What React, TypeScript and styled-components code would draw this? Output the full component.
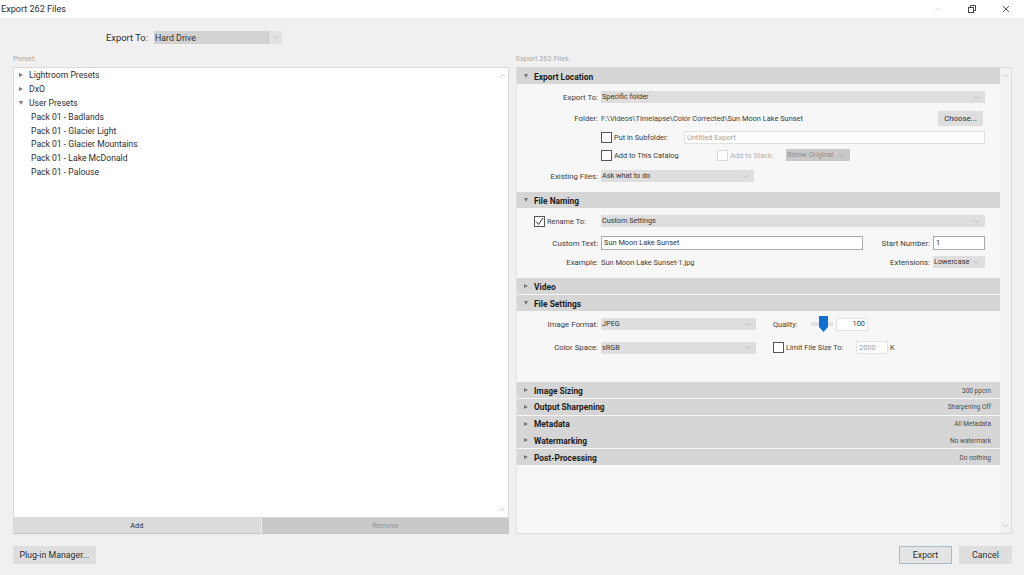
import React from "react";
import styled, { createGlobalStyle } from "styled-components";
import { ChevronDown, ChevronUp } from "lucide-react";

const GlobalStyle = createGlobalStyle`
  html, body {
    margin: 0;
    padding: 0;
    background: #f0f0f0;
  }
  * {
    box-sizing: border-box;
  }
`;

const Dialog = styled.div`
  width: 1024px;
  height: 575px;
  display: flex;
  flex-direction: column;
  overflow: hidden;
  background: #f0f0f0;
  color: #2e2e2e;
  font-family: Roboto, "Open Sans", sans-serif;
  font-size: 7.8px;
  line-height: 12px;
`;

const TitleBar = styled.div`
  height: 18px;
  flex: none;
  display: flex;
  align-items: center;
  justify-content: space-between;
  background: #ffffff;
  padding-left: 1px;
  font-size: 9.1px;
`;

const WindowButtons = styled.div`
  display: flex;
  align-items: center;
  gap: 26px;
  padding-right: 14px;
  color: #444;
`;

const ExportToBar = styled.div`
  height: 13px;
  margin: 13px 0 7px;
  padding-left: 106px;
  flex: none;
  display: flex;
  align-items: center;
  font-size: 9.4px;
`;

const ExportToLabel = styled.span`
  width: 48px;
  flex: none;
`;

const Columns = styled.div`
  display: flex;
  gap: 7px;
  padding: 0 12px 0 13px;
  height: 483px;
  flex: none;
`;

const Column = styled.div`
  width: 496px;
  display: flex;
  flex-direction: column;
`;

const ColumnCaption = styled.div`
  height: 16px;
  font-size: 7.4px;
  color: #a8a8a8;
  line-height: 16px;
  flex: none;
`;

const ListBox = styled.div`
  height: 451px;
  flex: none;
  display: flex;
  background: #ffffff;
  border: 1px solid #d9d9d9;
`;

const Tree = styled.div`
  flex: 1;
`;

const TreeRow = styled.div<{ $child?: boolean }>`
  height: 13.92px;
  display: flex;
  align-items: center;
  gap: 6px;
  padding-left: ${(p) => (p.$child ? 17 : 5)}px;
  font-size: 8.6px;
  white-space: nowrap;
`;

const Triangle = styled.span<{ $open?: boolean }>`
  width: 0;
  height: 0;
  flex: none;
  border-style: solid;
  border-color: transparent;
  ${(p) =>
    p.$open
      ? `border-width: 4px 2.5px 0 2.5px; border-top-color: #777;`
      : `border-width: 2.5px 0 2.5px 4px; border-left-color: #777;`}
`;

const ScrollBar = styled.div<{ $tinted?: boolean }>`
  width: 11px;
  flex: none;
  display: flex;
  flex-direction: column;
  align-items: center;
  justify-content: space-between;
  padding: 3px 0;
  color: #a8a8a8;
  background: ${(p) => (p.$tinted ? "#f2f2f2" : "transparent")};
`;

const ButtonPair = styled.div`
  height: 16px;
  flex: none;
  display: flex;
  gap: 1px;
`;

const PairButton = styled.div<{ $disabled?: boolean }>`
  flex: 1;
  display: flex;
  align-items: center;
  justify-content: center;
  background: ${(p) => (p.$disabled ? "#c9c9c9" : "#dcdcdc")};
  color: ${(p) => (p.$disabled ? "#949494" : "#2e2e2e")};
  border-bottom: 1px solid #c4c4c4;
  font-size: 7.3px;
`;

const Panels = styled.div`
  height: 467px;
  flex: none;
  display: flex;
  background: #f7f7f7;
  border: 1px solid #dcdcdc;
  border-left: 1px solid #e2e2e2;
`;

const PanelStack = styled.div`
  flex: 1;
  min-width: 0;
  display: flex;
  flex-direction: column;
`;

const SectionHeader = styled.div<{ $gapBelow?: number }>`
  height: 16px;
  flex: none;
  display: flex;
  align-items: center;
  gap: 6px;
  padding-left: 7px;
  padding-right: 9px;
  margin-bottom: ${(p) => p.$gapBelow ?? 0}px;
  background: #d6d6d6;
`;

const SectionTitle = styled.span`
  flex: 1;
  padding-top: 1px;
  font-weight: 700;
  font-size: 8.4px;
  color: #1c1c1c;
`;

const SectionSummary = styled.span`
  padding-top: 1px;
  font-size: 6.5px;
  color: #4a4a4a;
`;

const SectionBody = styled.div<{ $height: number }>`
  height: ${(p) => p.$height}px;
  flex: none;
  display: flex;
  flex-direction: column;
`;

const FormRow = styled.div<{ $top: number; $height?: number }>`
  height: ${(p) => p.$height ?? 12}px;
  margin-top: ${(p) => p.$top}px;
  flex: none;
  display: flex;
  align-items: center;
`;

const FieldLabel = styled.span<{ $width?: number }>`
  width: ${(p) => p.$width ?? 81}px;
  margin-right: 3px;
  padding-top: 1px;
  flex: none;
  text-align: right;
  white-space: nowrap;
  color: #3c3c3c;
`;

const Select = styled.div<{ $width: number; $muted?: boolean; $height?: number }>`
  width: ${(p) => p.$width}px;
  height: ${(p) => p.$height ?? 12}px;
  flex: none;
  display: flex;
  align-items: center;
  justify-content: space-between;
  padding: 0 4px 0 1px;
  font-size: 7.3px;
  background: ${(p) => (p.$muted ? "#c9c9c9" : "#dedede")};
  color: ${(p) => (p.$muted ? "#8e8e8e" : "#333")};
  white-space: nowrap;
`;

const TargetSelect = styled(Select)`
  padding: 0 0 0 1px;
  background: #d2d2d2;
  font-size: 8.8px;
`;

const TargetArrow = styled.span`
  width: 14px;
  height: 100%;
  display: flex;
  align-items: center;
  justify-content: center;
  background: #e2e2e2;
  border-left: 1px solid #c8c8c8;
  color: #8a8a8a;
`;

const Check = styled.span<{ $disabled?: boolean; $margin?: number }>`
  width: 11px;
  height: 11px;
  flex: none;
  margin-right: 2px;
  margin-left: ${(p) => p.$margin ?? 0}px;
  display: flex;
  align-items: center;
  justify-content: center;
  background: #fdfdfd;
  border: 1px solid ${(p) => (p.$disabled ? "#dadada" : "#555")};
`;

const TextBox = styled.div<{ $width: number; $height?: number; $strong?: boolean; $alignEnd?: boolean; $faint?: boolean }>`
  width: ${(p) => p.$width}px;
  height: ${(p) => p.$height ?? 14}px;
  flex: none;
  display: flex;
  align-items: center;
  justify-content: ${(p) => (p.$alignEnd ? "flex-end" : "flex-start")};
  padding: 0 2px;
  font-size: 7.4px;
  background: #ffffff;
  border: 1px solid ${(p) => (p.$strong ? "#a9a9a9" : "#e2e2e2")};
  color: ${(p) => (p.$faint ? "#a0a0a0" : "#333")};
`;

const PlainText = styled.span<{ $width?: number; $faint?: boolean; $margin?: number }>`
  ${(p) => (p.$width ? `width: ${p.$width}px;` : "")}
  ${(p) => (p.$margin ? `margin-left: ${p.$margin}px;` : "")}
  padding-top: 1px;
  flex: none;
  font-size: 7.4px;
  white-space: nowrap;
  color: ${(p) => (p.$faint ? "#b0b0b0" : "#3c3c3c")};
`;

const SmallButton = styled.div`
  width: 45px;
  height: 15px;
  flex: none;
  display: flex;
  align-items: center;
  justify-content: center;
  background: #dedede;
  font-size: 7.8px;
`;

const SliderTrack = styled.div`
  width: 22px;
  height: 4px;
  flex: none;
  margin: 0 3px 0 13px;
  background: #e2e2e2;
  position: relative;
`;

const SliderThumb = styled.svg`
  position: absolute;
  left: 8px;
  top: -6px;
  color: #0f6fd2;
`;

const Footer = styled.div`
  flex: 1;
  display: flex;
  justify-content: space-between;
  padding: 12px 12px 0 13px;
`;

const FooterGroup = styled.div`
  display: flex;
  gap: 7px;
`;

const FooterButton = styled.div<{ $width: number; $primary?: boolean }>`
  width: ${(p) => p.$width}px;
  height: 18px;
  display: flex;
  align-items: center;
  justify-content: center;
  font-size: 8.8px;
  background: ${(p) => (p.$primary ? "#e4e4e4" : "#dedede")};
  border: 1px solid ${(p) => (p.$primary ? "#a7bccb" : "#dedede")};
`;

const Arrow = ({ size = 9 }: { size?: number }) => <ChevronDown size={size} strokeWidth={1.2} color="#8f8f8f" />;

const collapsed = [
  ["Image Sizing", "300 ppcm"],
  ["Output Sharpening", "Sharpening Off"],
  ["Metadata", "All Metadata"],
  ["Watermarking", "No watermark"],
  ["Post-Processing", "Do nothing"],
];

export default function App() {
  return (
    <Dialog>
      <GlobalStyle />
      <TitleBar>
        Export 262 Files
        <WindowButtons>
          <svg width="8" height="8" viewBox="0 0 8 8">
            <path d="M1 4h6" stroke="#e0e0e0" strokeWidth="1" />
          </svg>
          <svg width="8" height="8" viewBox="0 0 8 8" fill="none" stroke="#444" strokeWidth="1">
            <rect x="0.5" y="2.5" width="5" height="5" />
            <path d="M2.5 2V0.5H7.5V5.5H6" />
          </svg>
          <svg width="8" height="8" viewBox="0 0 8 8" fill="none" stroke="#444" strokeWidth="0.9">
            <path d="M1 1l6 6M7 1L1 7" />
          </svg>
        </WindowButtons>
      </TitleBar>
      <ExportToBar>
        <ExportToLabel>Export To:</ExportToLabel>
        <TargetSelect $width={128} $height={13}>
          Hard Drive
          <TargetArrow>
            <Arrow />
          </TargetArrow>
        </TargetSelect>
      </ExportToBar>
      <Columns>
        <Column>
          <ColumnCaption>Preset:</ColumnCaption>
          <ListBox>
            <Tree>
              <TreeRow>
                <Triangle />
                Lightroom Presets
              </TreeRow>
              <TreeRow>
                <Triangle />
                DxO
              </TreeRow>
              <TreeRow>
                <Triangle $open />
                User Presets
              </TreeRow>
              <TreeRow $child>Pack 01 - Badlands</TreeRow>
              <TreeRow $child>Pack 01 - Glacier Light</TreeRow>
              <TreeRow $child>Pack 01 - Glacier Mountains</TreeRow>
              <TreeRow $child>Pack 01 - Lake McDonald</TreeRow>
              <TreeRow $child>Pack 01 - Palouse</TreeRow>
            </Tree>
            <ScrollBar>
              <ChevronUp size={9} strokeWidth={1.4} />
              <ChevronDown size={9} strokeWidth={1.4} />
            </ScrollBar>
          </ListBox>
          <ButtonPair>
            <PairButton>Add</PairButton>
            <PairButton $disabled>Remove</PairButton>
          </ButtonPair>
        </Column>
        <Column>
          <ColumnCaption>Export 262 Files</ColumnCaption>
          <Panels>
            <PanelStack>
              <SectionHeader>
                <Triangle $open />
                <SectionTitle>Export Location</SectionTitle>
              </SectionHeader>
              <SectionBody $height={108}>
                <FormRow $top={7}>
                  <FieldLabel>Export To:</FieldLabel>
                  <Select $width={384}>
                    Specific folder
                    <Arrow />
                  </Select>
                </FormRow>
                <FormRow $top={8} $height={15}>
                  <FieldLabel>Folder:</FieldLabel>
                  <PlainText $width={337}>F:\Videos\Timelapse\Color Corrected\Sun Moon Lake Sunset</PlainText>
                  <SmallButton>Choose...</SmallButton>
                </FormRow>
                <FormRow $top={5} $height={13}>
                  <FieldLabel />
                  <Check />
                  <PlainText $width={70}>Put in Subfolder:</PlainText>
                  <TextBox $width={301} $height={13} $faint>
                    Untitled Export
                  </TextBox>
                </FormRow>
                <FormRow $top={5}>
                  <FieldLabel />
                  <Check />
                  <PlainText $width={103}>Add to This Catalog</PlainText>
                  <Check $disabled />
                  <PlainText $width={56} $faint>
                    Add to Stack:
                  </PlainText>
                  <Select $width={64} $muted>
                    Below Original
                    <Arrow />
                  </Select>
                </FormRow>
                <FormRow $top={9}>
                  <FieldLabel>Existing Files:</FieldLabel>
                  <Select $width={153}>
                    Ask what to do
                    <Arrow />
                  </Select>
                </FormRow>
              </SectionBody>
              <SectionHeader>
                <Triangle $open />
                <SectionTitle>File Naming</SectionTitle>
              </SectionHeader>
              <SectionBody $height={70}>
                <FormRow $top={7}>
                  <FieldLabel $width={14} />
                  <Check>
                    <svg width="9" height="9" viewBox="0 0 9 9" fill="none" stroke="#333" strokeWidth="1">
                      <path d="M1 4.5l2.5 3L8 1" />
                    </svg>
                  </Check>
                  <PlainText $width={54}>Rename To:</PlainText>
                  <Select $width={384}>
                    Custom Settings
                    <Arrow />
                  </Select>
                </FormRow>
                <FormRow $top={9} $height={14}>
                  <FieldLabel>Custom Text:</FieldLabel>
                  <TextBox $width={262} $strong>
                    Sun Moon Lake Sunset
                  </TextBox>
                  <FieldLabel $width={67}>Start Number:</FieldLabel>
                  <TextBox $width={52} $strong>
                    1
                  </TextBox>
                </FormRow>
                <FormRow $top={6}>
                  <FieldLabel>Example:</FieldLabel>
                  <PlainText $width={262}>Sun Moon Lake Sunset-1.jpg</PlainText>
                  <FieldLabel $width={67}>Extensions:</FieldLabel>
                  <Select $width={52}>
                    Lowercase
                    <Arrow />
                  </Select>
                </FormRow>
              </SectionBody>
              <SectionHeader $gapBelow={1}>
                <Triangle />
                <SectionTitle>Video</SectionTitle>
              </SectionHeader>
              <SectionHeader>
                <Triangle $open />
                <SectionTitle>File Settings</SectionTitle>
              </SectionHeader>
              <SectionBody $height={71}>
                <FormRow $top={7}>
                  <FieldLabel>Image Format:</FieldLabel>
                  <Select $width={155}>
                    JPEG
                    <Arrow />
                  </Select>
                  <PlainText $width={25} $margin={17}>
                    Quality:
                  </PlainText>
                  <SliderTrack>
                    <SliderThumb width="9" height="16" viewBox="0 0 9 16">
                      <path d="M0 0h9v11l-4.5 5L0 11z" fill="currentColor" />
                    </SliderThumb>
                  </SliderTrack>
                  <TextBox $width={32} $height={13} $alignEnd>
                    100
                  </TextBox>
                </FormRow>
                <FormRow $top={11} $height={13}>
                  <FieldLabel>Color Space:</FieldLabel>
                  <Select $width={155}>
                    sRGB
                    <Arrow />
                  </Select>
                  <Check $margin={17} />
                  <PlainText $width={70}>Limit File Size To:</PlainText>
                  <TextBox $width={32} $height={13} $faint>
                    2000
                  </TextBox>
                  <PlainText $margin={2}>K</PlainText>
                </FormRow>
              </SectionBody>
              {collapsed.map(([title, summary]) => (
                <SectionHeader key={title} $gapBelow={0.75}>
                  <Triangle />
                  <SectionTitle>{title}</SectionTitle>
                  <SectionSummary>{summary}</SectionSummary>
                </SectionHeader>
              ))}
            </PanelStack>
            <ScrollBar $tinted>
              <ChevronUp size={9} strokeWidth={1.4} />
              <ChevronDown size={9} strokeWidth={1.4} />
            </ScrollBar>
          </Panels>
        </Column>
      </Columns>
      <Footer>
        <FooterButton $width={83}>Plug-in Manager...</FooterButton>
        <FooterGroup>
          <FooterButton $width={53} $primary>
            Export
          </FooterButton>
          <FooterButton $width={53}>Cancel</FooterButton>
        </FooterGroup>
      </Footer>
    </Dialog>
  );
}
